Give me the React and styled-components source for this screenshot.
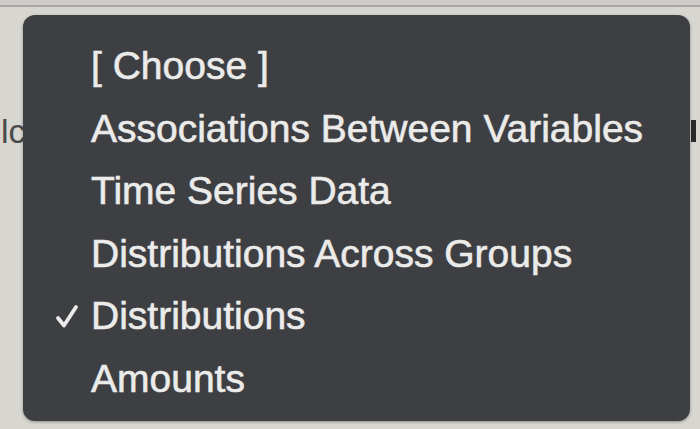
import React from "react";
import styled, { createGlobalStyle } from "styled-components";

const GlobalStyle = createGlobalStyle`
  html, body {
    margin: 0;
    padding: 0;
    background: #d8d6d0;
  }
  body {
    font-family: "Liberation Sans", Arial, sans-serif;
    overflow: hidden;
  }
`;

const items = [
  { label: "[ Choose ]" },
  { label: "Associations Between Variables" },
  { label: "Time Series Data" },
  { label: "Distributions Across Groups" },
  { label: "Distributions", checked: true },
  { label: "Amounts" },
];

const Page = styled.div`
  position: relative;
  width: 700px;
  height: 429px;
  background: #d8d6d0;
  overflow: hidden;
`;

const TopRule = styled.div`
  height: 5px;
  border-bottom: 2px solid #a9a8a4;
  background: #cfcdc7;
`;

const FieldRow = styled.div`
  display: flex;
  justify-content: space-between;
  align-items: center;
  margin-top: 104px;
  height: 40px;
`;

const FieldLabel = styled.span`
  margin-left: 1px;
  font-size: 34px;
  color: #4a4a4a;
`;

const FieldEdge = styled.span`
  width: 5px;
  height: 22px;
  margin-right: 4px;
  background: #2a2a2a;
`;

const Menu = styled.ul`
  position: absolute;
  top: 15px;
  left: 23px;
  width: 667px;
  height: 406px;
  box-sizing: border-box;
  margin: 0;
  padding: 20px 0 0 0;
  list-style: none;
  background: #3e3f43;
  border-radius: 12px;
  box-shadow: 0 1px 3px rgba(0, 0, 0, 0.35);
`;

const Item = styled.li`
  display: flex;
  align-items: center;
  height: 62.5px;
  font-size: 39px;
  line-height: 62px;
  color: #ebebea;
  -webkit-text-stroke: 0.6px #ebebea;
  white-space: nowrap;
`;

const CheckSlot = styled.span`
  display: flex;
  align-items: center;
  justify-content: flex-end;
  width: 56px;
  padding-right: 12px;
  flex-shrink: 0;
`;

const CheckIcon = styled.svg`
  display: block;
  width: 24px;
  height: 25px;
`;

const Check = () => (
  <CheckIcon viewBox="0 0 24 25" fill="none">
    <path
      d="M3 14 L9 21.5 L21 3"
      stroke="#ebebea"
      strokeWidth="3.8"
      strokeLinecap="round"
      strokeLinejoin="round"
    />
  </CheckIcon>
);

export default function App() {
  return (
    <>
      <GlobalStyle />
      <Page>
        <TopRule />
        <FieldRow>
          <FieldLabel>lc</FieldLabel>
          <FieldEdge />
        </FieldRow>
        <Menu>
          {items.map((item) => (
            <Item key={item.label}>
              <CheckSlot>{item.checked && <Check />}</CheckSlot>
              {item.label}
            </Item>
          ))}
        </Menu>
      </Page>
    </>
  );
}
